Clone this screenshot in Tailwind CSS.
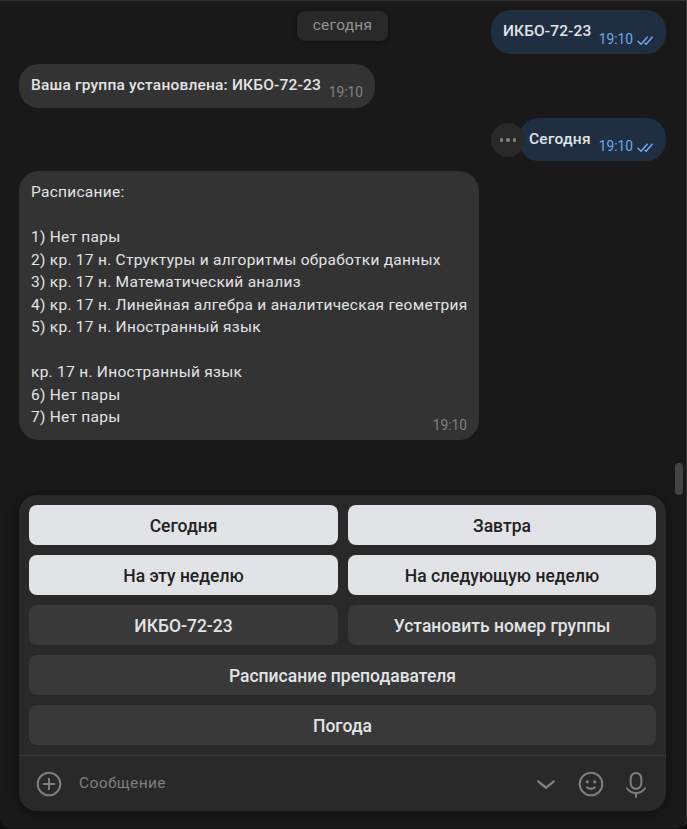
<!DOCTYPE html>
<html lang="ru">
<head>
<meta charset="utf-8">
<title>Чат</title>
<script src="https://cdn.jsdelivr.net/npm/@tailwindcss/browser@4"></script>
</head>
<body class="bg-[#0e0e0e]">
<div class="relative flex h-[829px] w-[687px] flex-col overflow-hidden rounded-b-[10px] border-t border-r border-b border-t-[#333] border-r-[#333] border-b-[#141414] bg-[#191919] pl-[19px] pr-[20px] font-['Roboto','Noto_Sans',sans-serif] text-[15.5px] leading-[22.5px] text-[#e1e3e6]">
  <main class="flex h-[494px] shrink-0 flex-col pt-[9px]">
    <div class="grid grid-cols-[1fr_auto_1fr] items-start">
      <span></span>
      <div class="mt-px h-[30px] w-[91px] rounded-[8px] bg-[#292929] pt-[3px] text-center tracking-[0.27px] text-[#939393] shadow-[0_1px_4px_rgba(0,0,0,0.3)]">сегодня</div>
      <div class="flex h-[44px] w-[175px] justify-between justify-self-end rounded-[20px] bg-[#1f2f41] pt-[10px] pr-[13px] pl-[12px]">
        <span class="font-medium tracking-[0.12px]">ИКБО-72-23</span>
        <span class="flex items-center pt-[5px] text-[13.75px] text-[#6fa8ee]">19:10
          <svg class="mt-[2px] ml-[4px] h-[10px] w-[16px]" viewBox="0 0 16 10" fill="none" stroke="currentColor" stroke-width="1.5" stroke-linecap="round" stroke-linejoin="round"><path d="M1 5.3l3 3L10.2 1.3M8 7.3l1.1 1L15.2 1.3"/></svg>
        </span>
      </div>
    </div>
    <div class="mt-[10px] flex h-[44px] w-[356px] shrink-0 justify-between rounded-[20px] bg-[#333] pt-[10px] pr-[12px] pl-[12px]">
      <span class="font-medium tracking-[0.2px]">Ваша группа установлена: ИКБО-72-23</span>
      <span class="pt-[7px] text-[13.75px] text-[#828282]">19:10</span>
    </div>
    <div class="relative mt-[10px] flex h-[43px] w-[147px] shrink-0 justify-between self-end rounded-[20px] bg-[#1f2f41] pt-[10px] pr-[13px] pl-[10px]">
      <button class="absolute top-[5px] left-[-28px] flex h-[34px] w-[34px] items-center justify-center gap-[3px] rounded-full bg-[#292929]"><i class="size-[3.5px] rounded-full bg-[#848484]"></i><i class="size-[3.5px] rounded-full bg-[#848484]"></i><i class="size-[3.5px] rounded-full bg-[#848484]"></i></button>
      <span class="font-medium tracking-[0.25px]">Сегодня</span>
      <span class="flex items-center pt-[4px] text-[13.75px] text-[#6fa8ee]">19:10
        <svg class="mt-[2px] ml-[4px] h-[10px] w-[16px]" viewBox="0 0 16 10" fill="none" stroke="currentColor" stroke-width="1.5" stroke-linecap="round" stroke-linejoin="round"><path d="M1 5.3l3 3L10.2 1.3M8 7.3l1.1 1L15.2 1.3"/></svg>
      </span>
    </div>
    <div class="mt-[10px] flex h-[269px] w-[460px] shrink-0 flex-col rounded-[20px] bg-[#333] px-[12px] pt-[10px] whitespace-nowrap">
      <p class="h-[233px] tracking-[0.27px]">Расписание:<br><br>1) Нет пары<br>2) кр. 17 н. Структуры и алгоритмы обработки данных<br>3) кр. 17 н. Математический анализ<br>4) кр. 17 н. Линейная алгебра и аналитическая геометрия<br>5) кр. 17 н. Иностранный язык<br><br>кр. 17 н. Иностранный язык<br>6) Нет пары<br>7) Нет пары</p>
      <span class="self-end text-[13.75px] text-[#828282]">19:10</span>
    </div>
  </main>
  <div class="absolute top-[462px] right-[3px] h-[32px] w-[8px] rounded-full bg-[#434343]"></div>
  <section class="h-[316px] w-[647px] shrink-0 rounded-[18px] bg-[#292929] shadow-[0_2px_14px_rgba(0,0,0,0.4)]">
    <div class="grid h-[260px] grid-cols-[309px_308px] auto-rows-[40px] gap-[10px] p-[10px] text-[17.5px] font-medium [&>button]:pt-[2px]">
      <button class="rounded-[8px] bg-[#e1e3e6] text-[#222]">Сегодня</button>
      <button class="rounded-[8px] bg-[#e1e3e6] text-[#222]">Завтра</button>
      <button class="rounded-[8px] bg-[#e1e3e6] text-[#222]">На эту неделю</button>
      <button class="rounded-[8px] bg-[#e1e3e6] text-[#222]">На следующую неделю</button>
      <button class="rounded-[8px] bg-[#393939]">ИКБО-72-23</button>
      <button class="rounded-[8px] bg-[#393939]">Установить номер группы</button>
      <button class="col-span-2 rounded-[8px] bg-[#393939]">Расписание преподавателя</button>
      <button class="col-span-2 rounded-[8px] bg-[#393939]">Погода</button>
    </div>
    <div class="flex h-[56px] items-center border-t border-[#393939] pr-[19px] pl-[17px] text-[#7f7f7f]">
      <svg class="size-[26px]" viewBox="0 0 26 26" fill="none" stroke="currentColor" stroke-width="2" stroke-linecap="round"><circle cx="13" cy="13" r="11.3"/><path d="M13 7.7v10.6M7.7 13h10.6"/></svg>
      <span class="ml-[17px] flex-1 tracking-[0.38px]">Сообщение</span>
      <svg class="mt-[2px] h-[12px] w-[20px]" viewBox="0 0 20 12" fill="none" stroke="currentColor" stroke-width="2.4" stroke-linecap="round" stroke-linejoin="round"><path d="M2.2 2.4l7.8 6.4 7.8-6.4"/></svg>
      <svg class="ml-[22px] size-[26px]" viewBox="0 0 26 26" fill="none" stroke="currentColor" stroke-width="2" stroke-linecap="round"><circle cx="13" cy="13" r="11.3"/><path d="M9 16.3q4 3.2 8 0"/><g fill="currentColor" stroke="none"><circle cx="9.3" cy="10.8" r="1.6"/><circle cx="16.7" cy="10.8" r="1.6"/></g></svg>
      <svg class="mt-[2px] ml-[21px] h-[28px] w-[22px]" viewBox="0 0 22 28" fill="none" stroke="currentColor" stroke-width="2" stroke-linecap="round"><rect x="5.7" y="2" width="10.6" height="15.8" rx="5.3"/><path d="M2 17.2q3.3 4.8 9 4.8t9-4.8M11 22v4"/></svg>
    </div>
  </section>
</div>
</body>
</html>
